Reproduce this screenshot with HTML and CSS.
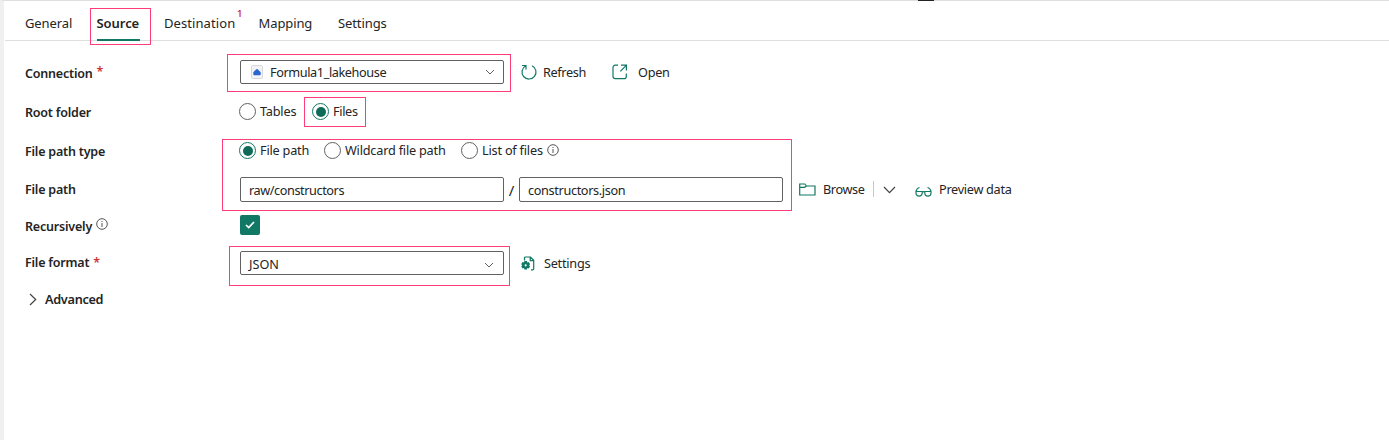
FILE: index.html
```html
<!DOCTYPE html>
<html lang="en">
<head>
<meta charset="utf-8">
<title>Copy data source</title>
<link rel="stylesheet" href="styles.css">
</head>
<body>
<main class="panel">
  <nav class="tabs">
    <a class="tab general">General</a>
    <a class="tab source active">Source</a>
    <a class="tab destination">Destination<sup>1</sup></a>
    <a class="tab mapping">Mapping</a>
    <a class="tab settings">Settings</a>
  </nav>
  <section class="form">
    <div class="row connection">
      <div class="label">Connection<span class="required raised">*</span></div>
      <div class="field select">
        <svg class="lake" width="12" height="14" viewBox="0 0 12 14"><rect x=".5" y=".5" width="11" height="13" rx="1" fill="#f1f3f7" stroke="#d8d8d8"/><path d="M2.300 7.200 5.400 4.200q.6-.6 1.200 0l3.100 3v2.100q0 .9-.9.9H3.200q-.9 0-.9-.9z" fill="#2866d0"/></svg>
        <span class="value lakehouse">Formula1_lakehouse</span>
        <svg class="chevron" width="10" height="6" viewBox="0 0 10 6"><path d="m1 1 4 4 4-4"/></svg>
      </div>
      <svg class="icon refresh-icon" width="18" height="18" viewBox="0 0 18 18"><path d="M5.800 2.800A7 7 0 1 0 12 2.700M2 2.500h4v4"/></svg>
      <span class="action refresh">Refresh</span>
      <svg class="icon open-icon" width="16" height="16" viewBox="0 0 16 16"><path d="M6 1.200H3.200A2.200 2.200 0 0 0 1 3.400v9A2.200 2.200 0 0 0 3.200 14.600h8.900a2.200 2.200 0 0 0 2.200-2.200V9.500M9 1.200h5.400v5.300M8.300 7.300l6-6"/></svg>
      <span class="action open">Open</span>
    </div>
    <div class="row root">
      <div class="label">Root folder</div>
      <span class="radio"></span><span class="option tables">Tables</span>
      <span class="radio checked"></span><span class="option files">Files</span>
    </div>
    <div class="row path-type">
      <div class="label">File path type</div>
      <span class="radio checked"></span><span class="option filepath">File path</span>
      <span class="radio"></span><span class="option wildcard">Wildcard file path</span>
      <span class="radio"></span><span class="option list">List of files</span>
      <svg class="info" width="12" height="12" viewBox="0 0 12 12"><circle cx="6" cy="6" r="5.300"/><path d="M6 5v4M6 3v1"/></svg>
    </div>
    <div class="row path">
      <div class="label">File path</div>
      <div class="field input"><span class="value directory">raw/constructors</span></div>
      <span class="slash">/</span>
      <div class="field input"><span class="value filename">constructors.json</span></div>
      <svg class="icon folder-icon" width="17" height="13" viewBox="0 0 17 13"><path d="M.7 1h5.200l1.600 2h8.500v9H.7zM.7 4.300h5L7.500 3"/></svg>
      <span class="action browse">Browse</span>
      <span class="divider"></span>
      <svg class="browse-chevron" width="13" height="8" viewBox="0 0 13 8"><path d="m1 1 5.500 5.700L12 1"/></svg>
      <svg class="icon glasses" width="17" height="11" viewBox="0 0 17 11"><path d="M1 5.500h6.200v1.600a3 3 0 0 1-6.200 0zM9.800 5.500H16v1.600a3 3 0 0 1-6.200 0zM1 5.500Q1.800 2 4.500 1.500M16 5.500Q15.200 2 12.500 1.500M7 6.200q1.500-1 3 0"/></svg>
      <span class="action preview">Preview data</span>
    </div>
    <div class="row recursive">
      <div class="label">Recursively<svg class="info" width="12" height="12" viewBox="0 0 12 12"><circle cx="6" cy="6" r="5.300"/><path d="M6 5v4M6 3v1"/></svg></div>
      <span class="checkbox"><svg width="10" height="8" viewBox="0 0 10 8"><path d="m1 4 2.700 2.600L9 1"/></svg></span>
    </div>
    <div class="row format">
      <div class="label">File format<span class="required">*</span></div>
      <div class="field select"><span class="value json">JSON</span><svg class="chevron" width="10" height="6" viewBox="0 0 10 6"><path d="m1 1 4 4 4-4"/></svg></div>
      <svg class="icon format-icon" width="14" height="15" viewBox="0 0 14 15"><path d="M3.500 4.500V2q0-1 1-1h5l3.200 3.300v8.500q0 1-1 1H10M9.200 1v3.600h3.500"/><path class="gear" d="M3.400 5h2.600l.3 1.400 1.500-.4 1.300 2.200-1.100 1 1.100 1.100-1.300 2.200-1.500-.5-.3 1.500H3.400L3 12l-1.500.5L.2 10.300l1.100-1.100-1.100-1L1.500 6l1.500.4zM4.700 8.200a1.100 1.100 0 1 0 0 2.200 1.100 1.100 0 0 0 0-2.200z"/></svg>
      <span class="action settings-text">Settings</span>
    </div>
    <div class="row advanced">
      <svg class="disclosure" width="8" height="13" viewBox="0 0 8 13"><path d="m1 1 5.700 5.500L1 12"/></svg>
      <span class="advanced-label">Advanced</span>
    </div>
  </section>
</main>
<span class="resize-handle"></span>
<div class="highlight h-source"></div>
<div class="highlight h-connection"></div>
<div class="highlight h-files"></div>
<div class="highlight h-path"></div>
<div class="highlight h-format"></div>
</body>
</html>
```
FILE: styles.css
```css
* { box-sizing: border-box; }
body { margin: 0; height: 440px; background: #fff; color: #242424; font: 12.700px/18px "Noto Sans", "Open Sans", sans-serif; letter-spacing: -.25px; overflow: hidden; }
svg { display: block; flex: none; fill: none; stroke: #424242; stroke-width: 1; }
span { flex: none; white-space: nowrap; }
.panel { height: 440px; border-left: 4px solid #f0f0f0; border-top: 1px solid #dedede; }
.tabs { display: flex; height: 40px; border-bottom: 1px solid #dedede; margin-left: 1px; padding-left: 20px; font-size: 13px; letter-spacing: -.1px; }
.tab { position: relative; height: 40px; padding-top: 13px; flex: none; white-space: nowrap; }
.general { width: 71.500px; }
.source { width: 43px; margin-right: 24.500px; letter-spacing: -.05px; }
.destination { width: 94.500px; letter-spacing: .08px; }
.mapping { width: 79.500px; }
.active { font-weight: 600; border-bottom: 2px solid #117865; }
sup { position: absolute; left: 73px; top: 8px; color: #c50f1f; font-size: 9.500px; line-height: 10px; font-weight: 500; }
.form { padding: 11px 0 0 21px; }
.row { display: flex; align-items: center; height: 39px; }
.connection { height: 40px; }
.recursive { height: 32px; }
.format { height: 44px; }
.advanced { height: 28px; }
.label { width: 215px; flex: none; display: flex; font-weight: 600; font-size: 12.500px; letter-spacing: -.2px; padding-top: 2px; }
.connection .label { padding-top: 3px; }
.path .label { padding-top: 0; }
.recursive .label { padding-top: 4px; }
.format .label { padding-top: 0; }
.required { color: #d13438; margin-left: 4px; }
.raised { margin: -2px 0 0 4px; }
.field { display: flex; align-items: center; width: 264px; height: 24px; border: 1px solid #616161; border-radius: 2px; padding: 0 8px; flex: none; }
.input { height: 25px; }
.input .value { margin-top: 1px; }
.directory { letter-spacing: -.42px; }
.filename { letter-spacing: -.35px; }
.lakehouse { letter-spacing: -.4px; }
.connection .select { padding-left: 10px; }
.lake { margin-right: 7px; stroke: none; }
.chevron { margin-left: auto; stroke: #616161; }
.icon { stroke: #117865; stroke-width: 1.200; }
.refresh-icon { margin: 0 5px 0 16px; }
.refresh { width: 69px; letter-spacing: -.35px; }
.open-icon { margin-right: 10px; }
.radio { display: grid; place-items: center; width: 17px; height: 17px; border: 1px solid #616161; border-radius: 50%; margin-left: -1px; }
.checked { border-color: #117865; }
.checked::after { content: ""; width: 10px; height: 10px; border-radius: 50%; background: #0f6b59; }
.option { margin-left: 4px; margin-top: -1px; letter-spacing: -.2px; }
.tables { width: 53px; }
.files { letter-spacing: -.35px; }
.filepath { width: 65px; }
.wildcard { width: 117px; }
.list { width: 65px; }
.info { stroke-width: .900; }
.path-type .info { margin-top: -2px; }
.slash { width: 15px; text-align: center; font-size: 15px; }
.folder-icon { margin: -1px 7px 0 16px; }
.browse { width: 50px; letter-spacing: -.4px; }
.path .action { margin-top: -1px; }
.divider { width: 1px; height: 16px; margin-top: -1px; background: #c8c8c8; }
.browse-chevron { margin: 0 19px 0 9px; stroke-width: 1.200; }
.glasses { margin: 3px 7px 0 0; }
.preview { letter-spacing: -.3px; }
.recursive .info { margin: 0 0 0 4px; }
.checkbox { display: grid; place-items: center; width: 20px; height: 20px; border-radius: 2px; background: #117865; }
.checkbox svg { stroke: #fff; stroke-width: 1.700; }
.format .select { padding-right: 9px; }
.format .chevron { margin-top: 3px; }
.json { margin-top: 2px; letter-spacing: 0; }
.format-icon { margin: 0 9px 0 17px; }
.gear { fill: #117865; fill-rule: evenodd; stroke: none; }
.disclosure { margin-left: 4px; stroke-width: 1.200; }
.advanced-label { margin-left: 8px; font-weight: 600; letter-spacing: -.3px; }
.resize-handle { position: absolute; left: 918px; top: 0; width: 16px; height: 1px; background: #242424; }
.highlight { position: absolute; border: 1px solid #ff3d78; pointer-events: none; }
.h-source { left: 90px; top: 8px; width: 61px; height: 37px; }
.h-connection { left: 227px; top: 54px; width: 284px; height: 38px; }
.h-files { left: 304px; top: 97px; width: 62px; height: 30px; }
.h-path { left: 222px; top: 139px; width: 570px; height: 72px; }
.h-format { left: 229px; top: 246px; width: 281px; height: 40px; }
```
